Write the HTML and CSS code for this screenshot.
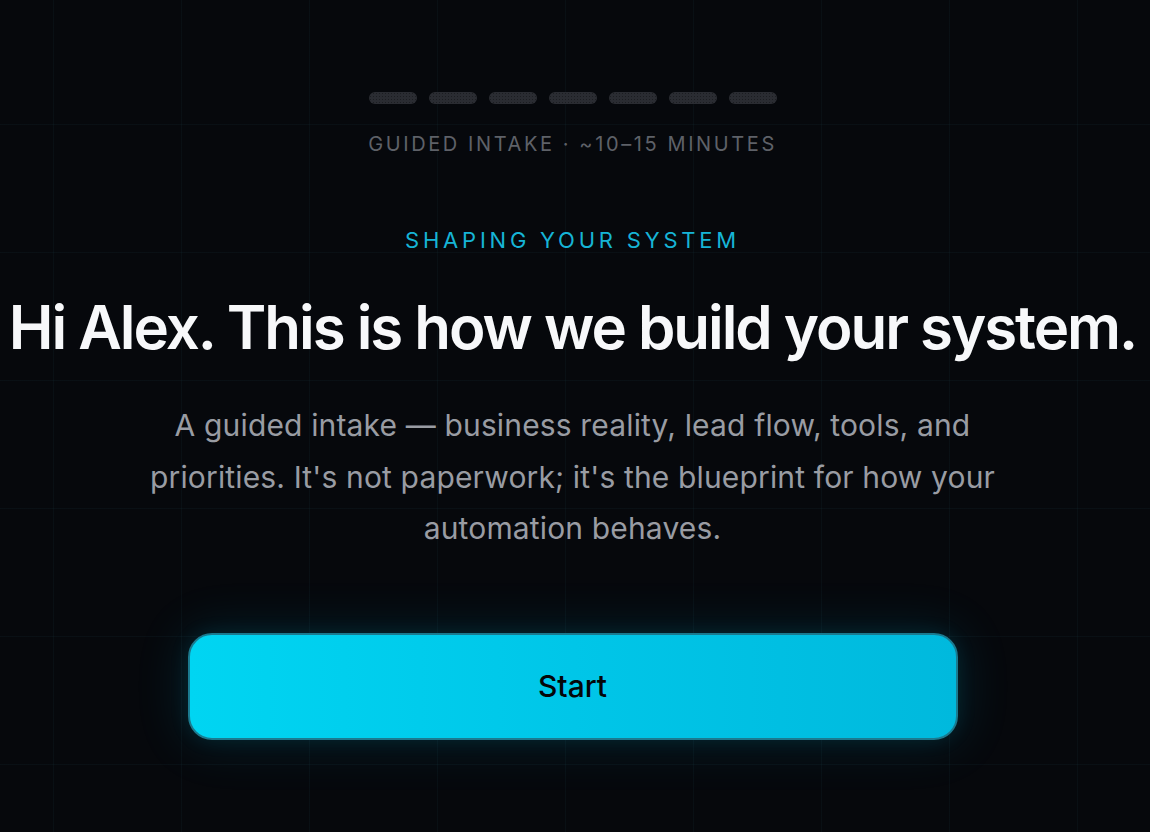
FILE: index.html
```html
<!DOCTYPE html>
<html lang="en">
<head>
<meta charset="utf-8">
<title>Guided intake</title>
<link rel="stylesheet" href="styles.css">
</head>
<body>
<main class="page">
  <div class="progress">
    <span class="pill"></span><span class="pill"></span><span class="pill"></span><span class="pill"></span><span class="pill"></span><span class="pill"></span><span class="pill"></span>
  </div>
  <p class="meta">GUIDED INTAKE · ~10–15 MINUTES</p>
  <p class="eyebrow">SHAPING YOUR SYSTEM</p>
  <h1 class="title">Hi Alex. This is how we build your system.</h1>
  <p class="lead">A guided intake — business reality, lead flow, tools, and priorities. It's not paperwork; it's the blueprint for how your automation behaves.</p>
  <button class="start" type="button">Start</button>
</main>
</body>
</html>
```
FILE: styles.css
```css
html, body {
  margin: 0;
  height: 100%;
}
body {
  background-color: #06080c;
  background-image:
    linear-gradient(to right, rgba(40, 110, 120, 0.08) 1px, transparent 1px),
    linear-gradient(to bottom, rgba(40, 110, 120, 0.08) 1px, transparent 1px);
  background-size: 128px 128px;
  background-position: 53px 124px;
  font-family: Inter, "Noto Sans", sans-serif;
  color: #f5f6f8;
  overflow: hidden;
}
.page {
  display: flex;
  flex-direction: column;
  align-items: center;
  padding: 92px 5px 0 0;
  text-align: center;
}
.progress {
  display: flex;
  gap: 12px;
}
.pill {
  width: 48px;
  height: 12px;
  border-radius: 6px;
  background-color: #2a2c32;
  background-image: radial-gradient(rgba(0,0,0,0.35) 0.6px, transparent 0.9px);
  background-size: 3px 3px;
}
.meta {
  margin: 28px 0 0;
  font-size: 20px;
  line-height: 24px;
  letter-spacing: 0.13em;
  color: #5e6168;
}
.eyebrow {
  margin: 71px 0 0;
  font-size: 22px;
  line-height: 26px;
  letter-spacing: 0.172em;
  color: #16b4d6;
}
.title {
  margin: 39px 0 0;
  font-size: 60px;
  line-height: 70px;
  font-weight: 600;
  letter-spacing: -0.034em;
  color: #f7f8fa;
  white-space: nowrap;
}
.lead {
  margin: 38px 0 0;
  max-width: 880px;
  font-size: 30px;
  line-height: 51.5px;
  letter-spacing: 0.005em;
  color: #999ca3;
}
.start {
  margin-top: 78px;
  width: 770px;
  height: 107px;
  border: 2px solid #1b7a8f;
  border-radius: 24px;
  background: linear-gradient(90deg, #00d5f2 0%, #00c6e8 50%, #00b9dd 100%);
  box-shadow: 0 0 50px 6px rgba(0, 190, 230, 0.12), 0 0 20px rgba(0, 200, 240, 0.10);
  font-family: Inter, "Noto Sans", sans-serif;
  font-size: 30px;
  font-weight: 500;
  color: #050608;
  cursor: pointer;
}
```
